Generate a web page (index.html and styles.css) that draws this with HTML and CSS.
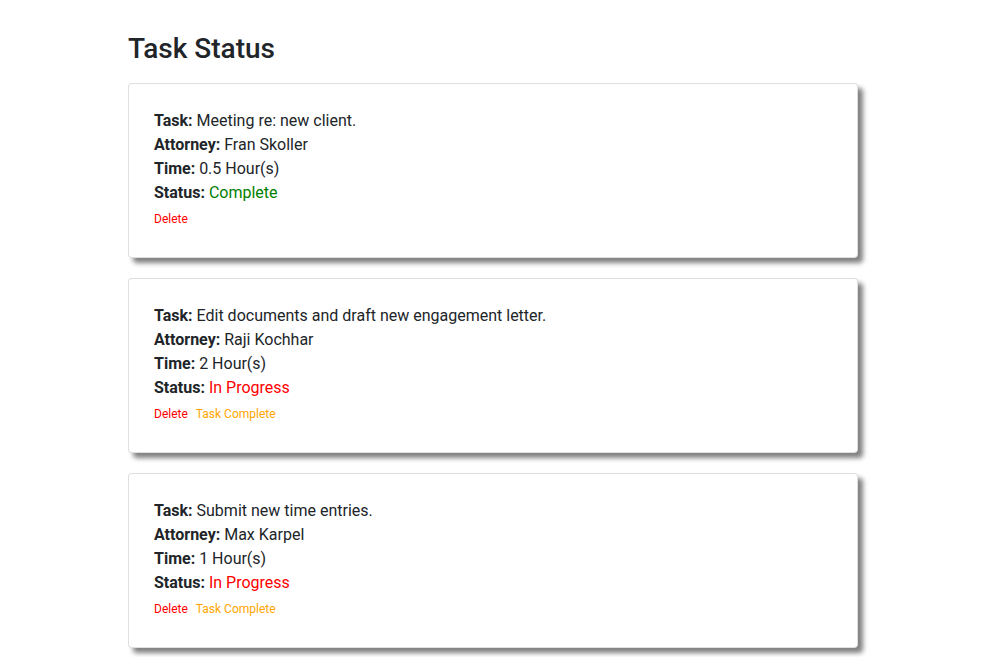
FILE: index.html
```html
<!DOCTYPE html>
<html>
<head>
<meta charset="utf-8">
<link rel="stylesheet" href="styles.css">
</head>
<body>
<div class="container">
  <h2 class="title">Task Status</h2>
  <div class="card">
    <div class="line"><b>Task:</b> Meeting re: new client.</div>
    <div class="line"><b>Attorney:</b> Fran Skoller</div>
    <div class="line"><b>Time:</b> 0.5 Hour(s)</div>
    <div class="line"><b>Status:</b> <span class="complete">Complete</span></div>
    <div class="actions"><a class="del">Delete</a></div>
  </div>
  <div class="card">
    <div class="line"><b>Task:</b> Edit documents and draft new engagement letter.</div>
    <div class="line"><b>Attorney:</b> Raji Kochhar</div>
    <div class="line"><b>Time:</b> 2 Hour(s)</div>
    <div class="line"><b>Status:</b> <span class="progress">In Progress</span></div>
    <div class="actions"><a class="del">Delete</a><a class="done">Task Complete</a></div>
  </div>
  <div class="card">
    <div class="line"><b>Task:</b> Submit new time entries.</div>
    <div class="line"><b>Attorney:</b> Max Karpel</div>
    <div class="line"><b>Time:</b> 1 Hour(s)</div>
    <div class="line"><b>Status:</b> <span class="progress">In Progress</span></div>
    <div class="actions"><a class="del">Delete</a><a class="done">Task Complete</a></div>
  </div>
</div>
</body>
</html>
```
FILE: styles.css
```css
* { box-sizing: border-box; }
body {
  margin: 0;
  font-family: Roboto, "Liberation Sans", sans-serif;
  font-size: 16px;
  line-height: 24px;
  color: #212529;
  background: #fff;
}
.container {
  width: 730px;
  margin-left: 128px;
  padding-top: 32px;
}
.title {
  margin: 0 0 17px 0;
  font-size: 28px;
  font-weight: 500;
  line-height: 34px;
}
.card {
  border: 1px solid rgba(0,0,0,.125);
  border-radius: 4px;
  background: #fff;
  box-shadow: 5px 5px 5px grey;
  padding: 25px 24px 29px 25px;
  margin-bottom: 20px;
  height: 175px;
}
.line b { font-weight: 700; }
.complete { color: green; }
.progress { color: red; }
.actions {
  margin-top: 5px;
  display: flex;
  gap: 8px;
  font-size: 12px;
  line-height: 18px;
}
.del { color: red; }
.done { color: orange; }
```
